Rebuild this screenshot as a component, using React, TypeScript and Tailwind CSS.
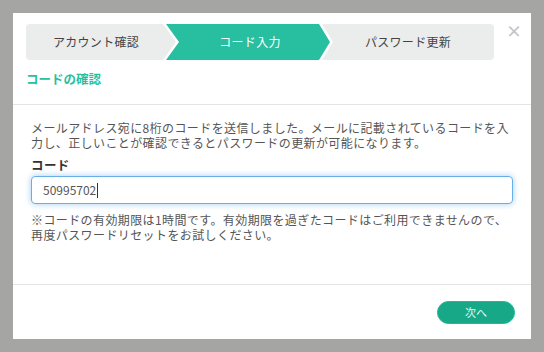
const steps = [
  { label: "アカウント確認", active: false },
  { label: "コード入力", active: true },
  { label: "パスワード更新", active: false },
];

const clips = [
  "polygon(0 0, calc(100% - 13px) 0, 100% 50%, calc(100% - 13px) 100%, 0 100%)",
  "polygon(0 0, calc(100% - 11px) 0, 100% 50%, calc(100% - 11px) 100%, 0 100%, 13px 50%)",
  "polygon(0 0, 100% 0, 100% 100%, 0 100%, 11px 50%)",
];

const App = () => {
  return (
    <div
      className="w-[544px] h-[352px] bg-[#a5a5a4] p-[13px]"
      style={{ fontFamily: '"Noto Sans CJK JP", "Noto Sans", sans-serif' }}
    >
      <div className="relative flex h-[326px] flex-col bg-white">
        <button className="absolute right-[9px] top-[9px] text-[16px] font-bold leading-none text-[#c4c4c4]">
          ×
        </button>

        <div className="border-b border-[#e5e5e5] pl-[13px] pr-[37px] pt-[11px] pb-[16px]">
          <div className="flex h-[36px] overflow-hidden rounded-[4px]">
            {steps.map((step, i) => (
              <div
                key={step.label}
                className={
                  "flex items-center justify-center text-[12px] tracking-[0.3px] " +
                  (i === 0 ? "w-[150px] pr-[10px] " : i === 1 ? "-ml-[10px] w-[164px] pl-[4px] " : "-ml-[8px] flex-1 ") +
                  (step.active ? "bg-[#27bf9f] text-white" : "bg-[#ebecec] text-[#444]")
                }
                style={{ clipPath: clips[i] }}
              >
                {step.label}
              </div>
            ))}
          </div>
          <h2 className="mt-[10px] text-[12.5px] font-bold leading-[18px] text-[#27bf9f]">
            コードの確認
          </h2>
        </div>

        <div className="flex-1 px-[18px] pt-[16px] text-[12px] tracking-[0.4px] text-[#555]">
          <p className="leading-[14.5px]">
            メールアドレス宛に8桁のコードを送信しました。メールに記載されているコードを入力し、正しいことが確認できるとパスワードの更新が可能になります。
          </p>
          <label className="mt-[8px] block text-[12.5px] font-bold leading-[14px] text-[#333]">
            コード
          </label>
          <div className="mt-[4px] flex h-[28px] items-center rounded-[4px] border border-[#66afe9] px-[11px] text-[12px] tracking-normal text-[#555] shadow-[0_0_6px_rgba(102,175,233,0.6)]">
            50995702
            <span className="ml-[1px] h-[15px] w-px bg-[#333]" />
          </div>
          <p className="mt-[8px] leading-[15px]">
            ※コードの有効期限は1時間です。有効期限を過ぎたコードはご利用できませんので、再度パスワードリセットをお試しください。
          </p>
        </div>

        <div className="flex h-[55px] items-center justify-end border-t border-[#e5e5e5] pr-[16px]">
          <button className="h-[23px] w-[78px] rounded-full border border-[#1dba97] bg-[#17a887] text-[11px] text-white/90">
            次へ
          </button>
        </div>
      </div>
    </div>
  );
};

export default App;
